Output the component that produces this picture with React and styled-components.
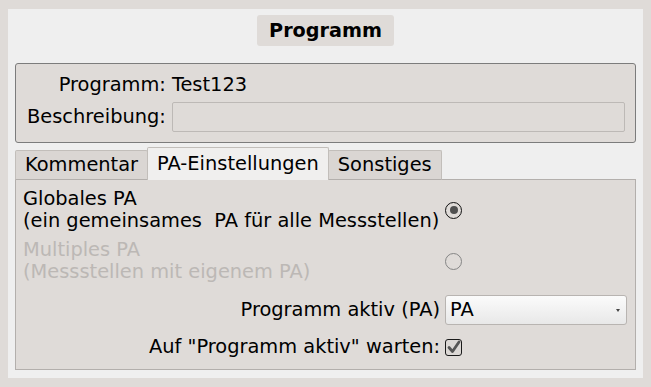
import React from "react";
import styled, { createGlobalStyle } from "styled-components";

const Global = createGlobalStyle`
  html, body { margin: 0; padding: 0; background: #dfdbd8; }
  body { font-family: "DejaVu Sans", "Liberation Sans", sans-serif; font-size: 19.4px; color: #000; }
  * { box-sizing: border-box; }
`;

const Window = styled.div`
  width: 651px;
  height: 387px;
  padding: 9px 8px;
  background: #dfdbd8;
`;

const Panel = styled.div`
  background: #efefef;
  padding: 6px 7px 8px 7px;
  display: flex;
  flex-direction: column;
`;

const TitleRow = styled.div`
  display: flex;
  justify-content: center;
`;

const TitleChip = styled.div`
  height: 31px;
  padding: 0 12px;
  display: flex;
  align-items: center;
  background: #dfdbd8;
  border-radius: 3px;
  font-weight: bold;
  font-size: 19.2px;
`;

const GroupBox = styled.div`
  margin-top: 17px;
  border: 1px solid #7c7c7c;
  border-radius: 3px;
  background: #dfdbd8;
  padding: 10px 10px 10px 11px;
  display: grid;
  grid-template-columns: auto 1fr;
  column-gap: 6px;
  row-gap: 6px;
  align-items: center;
`;

const FormLabel = styled.div`
  text-align: right;
  line-height: 22px;
  white-space: nowrap;
`;

const FormValue = styled.div`
  line-height: 22px;
`;

const TextInput = styled.div`
  height: 30px;
  border: 1px solid #bdb9b6;
  border-radius: 2px;
  background: #dfdbd8;
`;

const TabBar = styled.div`
  margin-top: 4px;
  display: flex;
  align-items: flex-end;
  position: relative;
  z-index: 1;
  margin-bottom: -1px;
`;

const Tab = styled.div`
  height: ${(p) => (p.$active ? "33px" : "30px")};
  padding: 0 9px;
  display: flex;
  align-items: center;
  line-height: 22px;
  border: 1px solid #c2beba;
  border-bottom: ${(p) => (p.$active ? "none" : "1px solid #b3afac")};
  margin-left: ${(p) => (p.$first ? "0" : "-1px")};
  background: ${(p) => (p.$active ? "#f0efee" : "#dad6d3")};
  border-radius: 2px 2px 0 0;
  position: relative;
  z-index: ${(p) => (p.$active ? 2 : 1)};
  padding-bottom: ${(p) => (p.$active ? "1px" : "0")};
`;

const Pane = styled.div`
  border: 1px solid #b3afac;
  background: #dfdbd8;
  padding: 8px 8px 11px 7px;
  display: flex;
  flex-direction: column;
`;

const Row = styled.div`
  display: flex;
  align-items: center;
  gap: 5px;
  margin-top: ${(p) => p.$mt || 0}px;
`;

const RowLabel = styled.div`
  flex: 1;
  line-height: 22px;
  text-align: ${(p) => (p.$right ? "right" : "left")};
  color: ${(p) => (p.$disabled ? "#bcb8b5" : "#000")};
  white-space: nowrap;
`;

const Control = styled.div`
  width: 182px;
  display: flex;
  align-items: center;
`;

const Radio = styled.div`
  width: 17px;
  height: 17px;
  border-radius: 50%;
  border: ${(p) => (p.$checked ? "1.6px solid #111" : "1.3px solid #858585")};
  display: flex;
  align-items: center;
  justify-content: center;
  &::after {
    content: "";
    display: ${(p) => (p.$checked ? "block" : "none")};
    width: 8px;
    height: 8px;
    border-radius: 50%;
    background: #505050;
  }
`;

const Combo = styled.div`
  width: 182px;
  height: 30px;
  border: 1px solid #b8b4b1;
  border-radius: 3px;
  background: linear-gradient(#fbfbfb, #e8e8e8);
  display: flex;
  align-items: center;
  justify-content: space-between;
  padding: 0 6px 0 4px;
  line-height: 22px;
`;

const Arrow = styled.span`
  width: 0;
  height: 0;
  border-left: 2.5px solid transparent;
  border-right: 2.5px solid transparent;
  border-top: 3px solid #444;
`;

const CheckBox = styled.div`
  width: 17px;
  height: 17px;
  border: 1.6px solid #1a1a1a;
  border-radius: 3px;
  background: #dcd8d5;
  display: flex;
  align-items: center;
  justify-content: center;
`;

export default function App() {
  return (
    <Window>
      <Global />
      <Panel>
        <TitleRow>
          <TitleChip>Programm</TitleChip>
        </TitleRow>
        <GroupBox>
          <FormLabel>Programm:</FormLabel>
          <FormValue>Test123</FormValue>
          <FormLabel>Beschreibung:</FormLabel>
          <TextInput />
        </GroupBox>
        <TabBar>
          <Tab $first>Kommentar</Tab>
          <Tab $active>PA-Einstellungen</Tab>
          <Tab>Sonstiges</Tab>
        </TabBar>
        <Pane>
          <Row>
            <RowLabel>
              Globales PA
              <br />
              (ein gemeinsames&nbsp; PA für alle Messstellen)
            </RowLabel>
            <Control>
              <Radio $checked />
            </Control>
          </Row>
          <Row $mt={7}>
            <RowLabel $disabled>
              Multiples PA
              <br />
              (Messstellen mit eigenem PA)
            </RowLabel>
            <Control>
              <Radio />
            </Control>
          </Row>
          <Row $mt={12}>
            <RowLabel $right>Programm aktiv (PA)</RowLabel>
            <Control>
              <Combo>
                <span>PA</span>
                <Arrow />
              </Combo>
            </Control>
          </Row>
          <Row $mt={11}>
            <RowLabel $right>Auf "Programm aktiv" warten:</RowLabel>
            <Control>
              <CheckBox>
                <svg width="14" height="14" viewBox="0 0 14 14">
                  <path d="M2 7.5 L5.5 11.5 L12 2" fill="none" stroke="#555" strokeWidth="2.8" strokeLinecap="round" strokeLinejoin="round" />
                </svg>
              </CheckBox>
            </Control>
          </Row>
        </Pane>
      </Panel>
    </Window>
  );
}
